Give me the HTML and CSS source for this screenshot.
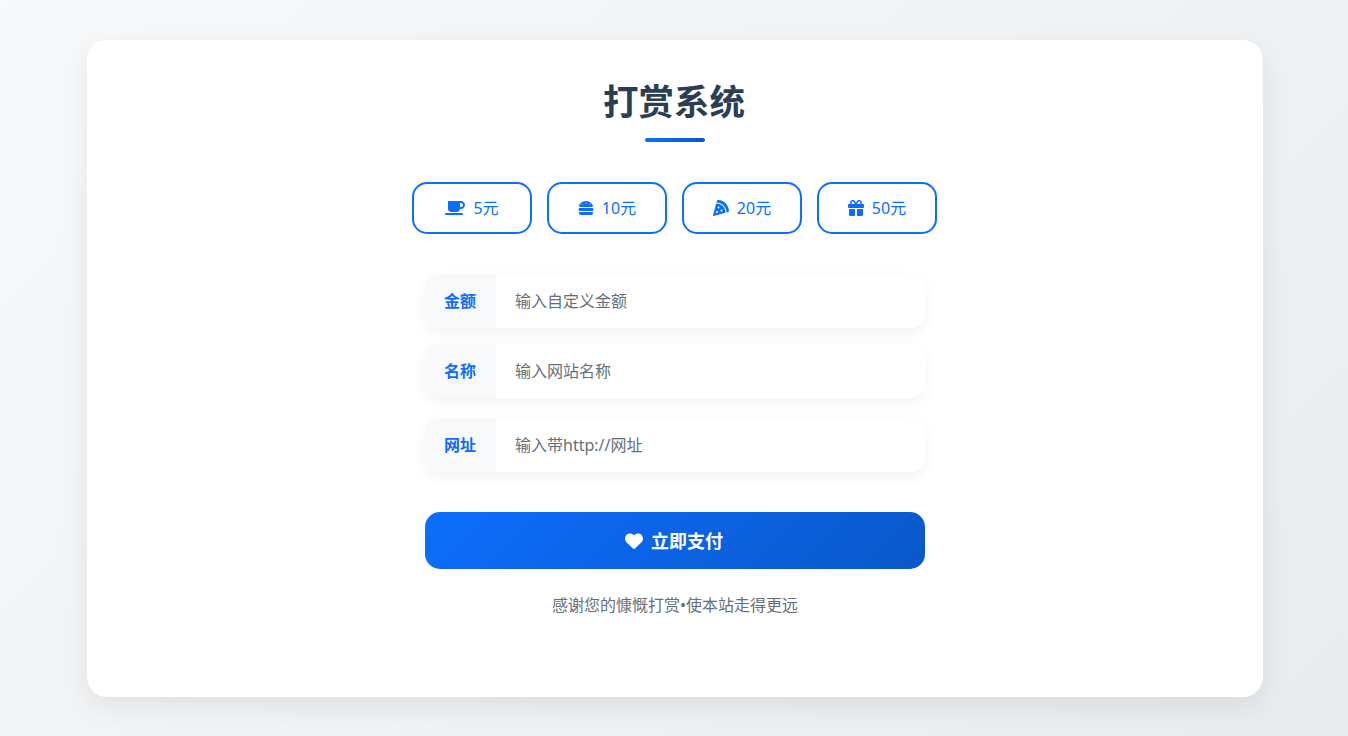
FILE: index.html
```html
<!DOCTYPE html>
<html lang="zh-CN">
<head>
<meta charset="utf-8">
<title>打赏系统</title>
<link rel="stylesheet" href="styles.css">
</head>
<body>
<main class="card">
  <h1 class="title">打赏系统</h1>
  <div class="title-bar"></div>
  <div class="amounts">
    <button class="amount" type="button">
      <svg class="icon icon-wide" viewBox="0 0 640 512"><path d="M96 64c0-17.700 14.300-32 32-32H448h64c70.700 0 128 57.300 128 128s-57.300 128-128 128H480c0 53-43 96-96 96H192c-53 0-96-43-96-96V64zM480 224h32c35.300 0 64-28.700 64-64s-28.700-64-64-64H480V224zM32 416H544c17.700 0 32 14.300 32 32s-14.300 32-32 32H32c-17.700 0-32-14.300-32-32s14.300-32 32-32z"/></svg>
      <span>5元</span>
    </button>
    <button class="amount" type="button">
      <svg class="icon" viewBox="0 0 512 512"><path d="M61.100 224C45 224 32 211 32 194.900c0-1.900 .2-3.700 .6-5.600C37.900 168.300 78.800 32 256 32s218.100 136.300 223.400 157.300c.5 1.900 .6 3.700 .6 5.600c0 16.100-13 29.100-29.100 29.100H61.100zM144 128a16 16 0 1 0 -32 0 16 16 0 1 0 32 0zm240 16a16 16 0 1 0 0-32 16 16 0 1 0 0 32zM272 96a16 16 0 1 0 -32 0 16 16 0 1 0 32 0zM16 304c0-26.500 21.500-48 48-48H448c26.500 0 48 21.500 48 48s-21.500 48-48 48H64c-26.500 0-48-21.500-48-48zm16 96c0-8.800 7.200-16 16-16H464c8.800 0 16 7.200 16 16v16c0 35.300-28.700 64-64 64H96c-35.300 0-64-28.700-64-64V400z"/></svg>
      <span>10元</span>
    </button>
    <button class="amount" type="button">
      <svg class="icon" viewBox="0 0 512 512"><path d="M169.700 .9c-22.800-1.600-41.900 14-47.500 34.700L110.400 80c.5 0 1.100 0 1.600 0c176.700 0 320 143.300 320 320c0 .5 0 1.100 0 1.600l44.400-11.800c20.800-5.500 36.300-24.700 34.700-47.500C498.500 159.500 352.500 13.500 169.700 .9zM399.800 410.200c.1-3.400 .2-6.800 .2-10.200c0-159.100-128.900-288-288-288c-3.400 0-6.800 .1-10.200 .2L.5 491.900c-1.500 5.500 .1 11.400 4.100 15.400s9.900 5.600 15.400 4.100L399.800 410.200zM176 208a32 32 0 1 1 0 64 32 32 0 1 1 0-64zm64 128a32 32 0 1 1 64 0 32 32 0 1 1 -64 0zM96 384a32 32 0 1 1 64 0 32 32 0 1 1 -64 0z"/></svg>
      <span>20元</span>
    </button>
    <button class="amount" type="button">
      <svg class="icon" viewBox="0 0 512 512"><path d="M190.500 68.800L225.300 128H224 152c-22.100 0-40-17.900-40-40s17.900-40 40-40h2.200c14.900 0 28.800 7.900 36.300 20.800zM64 88c0 14.400 3.500 28 9.600 40H32c-17.700 0-32 14.300-32 32v64c0 17.700 14.300 32 32 32H480c17.700 0 32-14.300 32-32V160c0-17.700-14.300-32-32-32H438.400c6.100-12 9.600-25.600 9.600-40c0-48.600-39.400-88-88-88h-2.200c-31.900 0-61.500 16.900-77.700 44.400L256 85.500l-24.100-41C215.700 16.900 186.100 0 154.200 0H152C103.400 0 64 39.400 64 88zm336 0c0 22.100-17.900 40-40 40H288h-1.300l34.800-59.200C329.100 55.900 342.900 48 357.800 48H360c22.100 0 40 17.900 40 40zM32 288V464c0 26.500 21.500 48 48 48H224V288H32zM288 512H432c26.500 0 48-21.500 48-48V288H288V512z"/></svg>
      <span>50元</span>
    </button>
  </div>
  <form class="form">
    <label class="field field-a"><span class="field-label">金额</span><input class="field-input" type="text" placeholder="输入自定义金额"></label>
    <label class="field field-b"><span class="field-label">名称</span><input class="field-input" type="text" placeholder="输入网站名称"></label>
    <label class="field field-c"><span class="field-label">网址</span><input class="field-input" type="text" placeholder="输入带http://网址"></label>
    <button class="pay" type="button">
      <svg class="heart" viewBox="0 0 512 512"><path d="M47.600 300.400L228.300 469.100c7.500 7 17.400 10.900 27.700 10.900s20.200-3.900 27.700-10.900L464.400 300.400c30.400-28.300 47.600-68 47.600-109.500v-5.800c0-69.900-50.500-129.500-119.400-141C347 36.500 300.600 51.400 268 84L256 96 244 84c-32.600-32.600-79-47.500-124.600-39.900C50.500 55.600 0 115.200 0 185.100v5.800c0 41.500 17.200 81.200 47.600 109.500z"/></svg>
      <span>立即支付</span>
    </button>
  </form>
  <p class="note">感谢您的慷慨打赏•使本站走得更远</p>
</main>
</body>
</html>
```

FILE: styles.css
```css
* { box-sizing: border-box; }

html, body { margin: 0; height: 100%; }

body {
  min-height: 736px;
  padding: 40px 85px 39px 87px;
  background: linear-gradient(135deg, #f8f9fa 0%, #e9ecef 100%);
  font-family: "Noto Sans", "Noto Sans CJK SC", sans-serif;
  font-size: 16px;
  overflow: hidden;
}

.card {
  display: flex;
  flex-direction: column;
  align-items: center;
  height: 657px;
  padding: 38px 0 0;
  background: #fff;
  border-radius: 20px;
  box-shadow: 0 10px 30px rgba(0, 0, 0, 0.08);
}

.title {
  margin: 0 0 0 -2px;
  font-size: 35.5px;
  line-height: 46px;
  font-weight: 700;
  color: #2c3e50;
}

.title-bar {
  width: 60px;
  height: 4px;
  margin-top: 14px;
  border-radius: 2px;
  background: linear-gradient(90deg, #0d6efd, #0a58ca);
}

.amounts {
  display: flex;
  gap: 15px;
  margin-top: 40px;
  margin-left: -1px;
}

.amount {
  display: flex;
  align-items: center;
  justify-content: center;
  width: 120px;
  height: 52px;
  padding: 0 0 2px;
  border: 2px solid #0d6efd;
  border-radius: 15px;
  background: #fff;
  color: #0d6efd;
  font: inherit;
}

.icon {
  width: 16px;
  height: 16px;
  margin: 2px 8px 0 0;
  fill: currentColor;
}

.icon-wide { width: 20px; }

.form {
  display: flex;
  flex-direction: column;
  width: 500px;
  margin-top: 40px;
}

.field {
  display: flex;
  height: 54px;
  border-radius: 15px;
  overflow: hidden;
  box-shadow: 0 5px 15px rgba(0, 0, 0, 0.05);
}

.field-a { margin-bottom: 16px; }
.field-b { margin-bottom: 20px; }
.field-c { margin-bottom: 40px; }

.field-label {
  display: flex;
  align-items: center;
  padding: 0 0 2px 19px;
  width: 71px;
  flex: none;
  background: #f8f9fa;
  color: #0d6efd;
  font-weight: 700;
  white-space: nowrap;
}

.field-input {
  flex: 1;
  min-width: 0;
  padding: 0 20px 0 19px;
  border: 0;
  outline: 0;
  background: #fff;
  font: inherit;
  color: #212529;
}

.field-input::placeholder { color: #666f78; opacity: 1; }

.pay {
  display: flex;
  align-items: center;
  justify-content: center;
  height: 57px;
  padding: 0 2px 2px 0;
  border: 0;
  border-radius: 15px;
  background: linear-gradient(135deg, #0d6efd, #0a58ca);
  color: #fff;
  font: inherit;
  font-size: 18px;
  font-weight: 700;
}

.heart {
  width: 18px;
  height: 18px;
  margin: 2px 8px 0 0;
  fill: currentColor;
}

.note {
  margin: 24px 0 0;
  line-height: 24px;
  color: #666f78;
}
```
